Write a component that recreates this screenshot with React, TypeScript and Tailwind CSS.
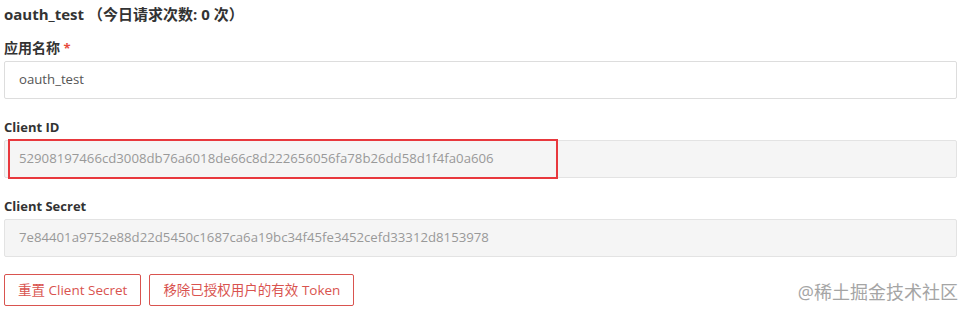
export default function App() {
  const font = { fontFamily: '"Open Sans", "Noto Sans CJK SC", sans-serif' };
  return (
    <div className="relative w-[971px] h-[317px] bg-white text-[#333]" style={font}>
      <div className="pl-[4px] pr-[14px]">
        <h3 className="h-[28px] leading-[28px] text-[15px] font-bold text-[#333]">
          oauth_test （今日请求次数: 0 次）
        </h3>

        <div className="mt-[10px]">
          <label className="block h-[20px] leading-[20px] text-[13px] font-bold">
            <span className="text-[14px]">应用名称</span> <span className="text-[#e74c3c]">*</span>
          </label>
          <div className="mt-[3px] flex h-[38px] items-center rounded-[2px] border border-[#ddd] bg-white px-[14px] text-[13.2px] text-[#555]">
            oauth_test
          </div>
        </div>

        <div className="mt-[18px]">
          <label className="block h-[20px] leading-[20px] text-[13px] font-bold">Client ID</label>
          <div className="relative mt-[3px] flex h-[38px] items-center rounded-[2px] border border-[#e3e3e3] bg-[#f5f5f5] px-[14px] text-[13.2px] text-[#999]">
            52908197466cd3008db76a6018de66c8d222656056fa78b26dd58d1f4fa0a606
            <div className="absolute left-[3px] top-[-2px] h-[40px] w-[550px] border-2 border-[#e8383d]" />
          </div>
        </div>

        <div className="mt-[18px]">
          <label className="block h-[20px] leading-[20px] text-[13px] font-bold">Client Secret</label>
          <div className="mt-[3px] flex h-[38px] items-center rounded-[2px] border border-[#e3e3e3] bg-[#f5f5f5] px-[14px] text-[13.2px] text-[#999]">
            7e84401a9752e88d22d5450c1687ca6a19bc34f45fe3452cefd33312d8153978
          </div>
        </div>

        <div className="mt-[17px] flex gap-[8px]">
          <button className="h-[32px] rounded-[2px] border border-[#d9534f] px-[13px] text-[13.5px] text-[#d9534f]">
            重置 Client Secret
          </button>
          <button className="h-[32px] rounded-[2px] border border-[#d9534f] px-[13px] text-[13.5px] text-[#d9534f]">
            移除已授权用户的有效 Token
          </button>
        </div>
      </div>

      <div className="absolute right-[13px] top-[279px] text-[18px] leading-[26px] text-[#a5a5a5]">
        @稀土掘金技术社区
      </div>
    </div>
  );
}
